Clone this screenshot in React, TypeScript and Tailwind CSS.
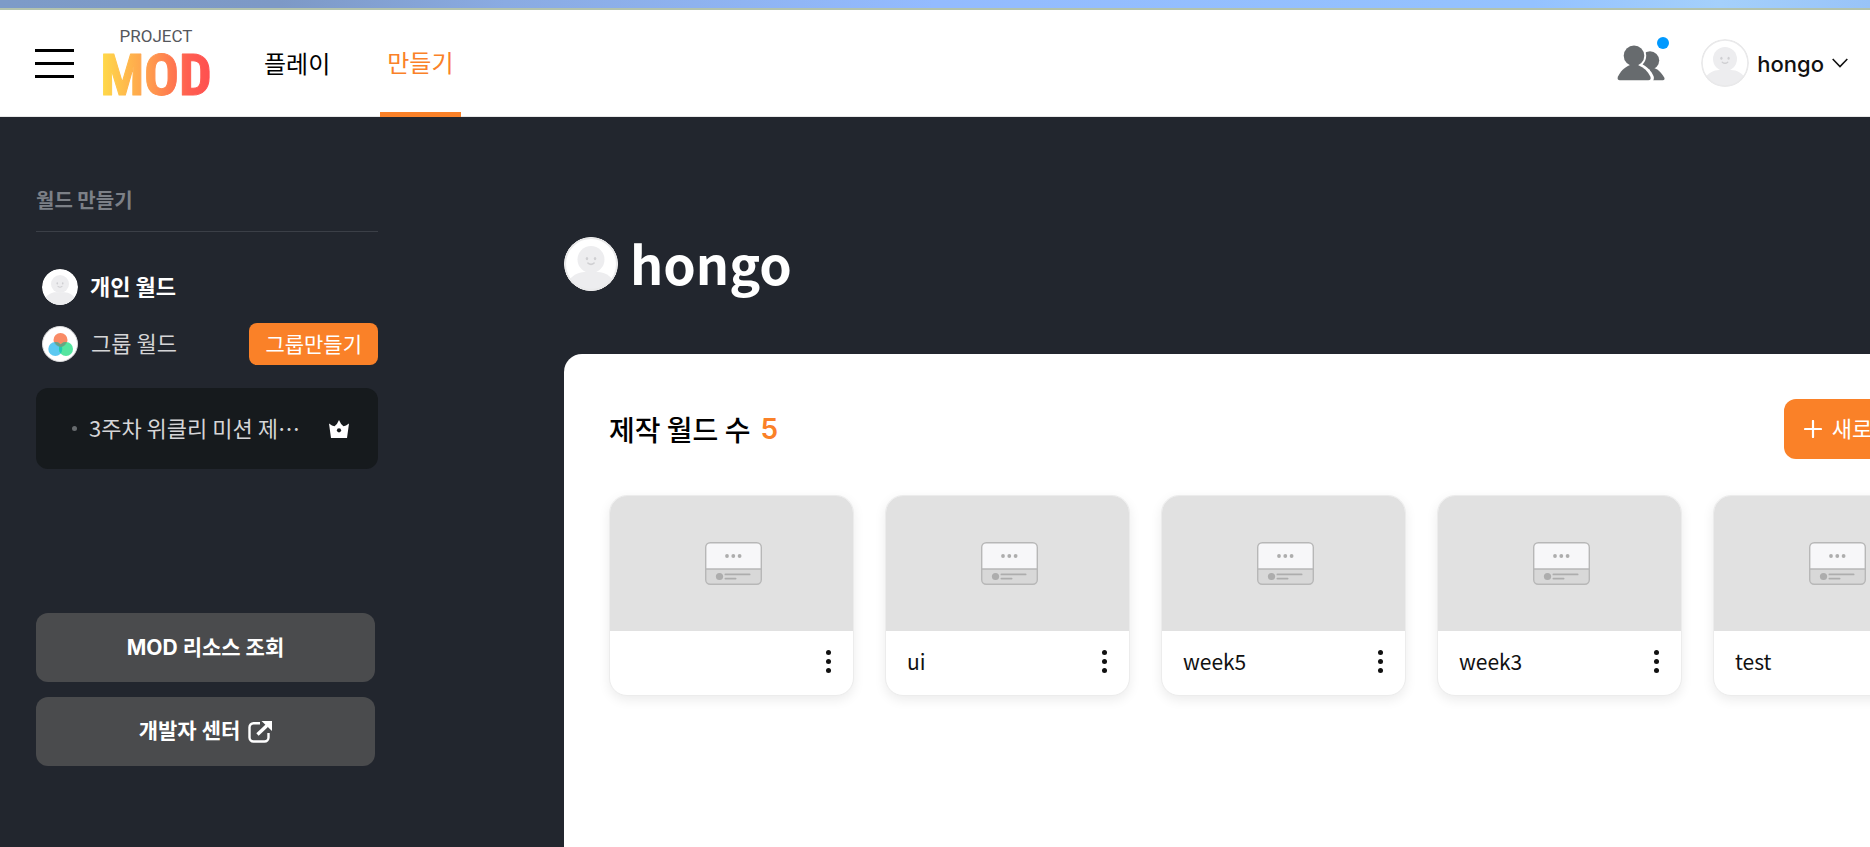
import React from "react";

type World = { id: number; name: string };

const worlds: World[] = [
  { id: 1, name: "" },
  { id: 2, name: "ui" },
  { id: 3, name: "week5" },
  { id: 4, name: "week3" },
  { id: 5, name: "test" },
];

function Avatar({ className, ring = false }: { className: string; ring?: boolean }) {
  return (
    <svg viewBox="0 0 48 48" className={`shrink-0 rounded-full ${className}`} aria-hidden="true">
      <defs>
        <clipPath id="avatar-clip">
          <circle cx="24" cy="24" r="24" />
        </clipPath>
      </defs>
      <g clipPath="url(#avatar-clip)">
        <rect width="48" height="48" fill="#fff" />
        <path d="M3 40C7 34 13 31 18 31h12c6 0 11 3 15 9v8H3z" fill="#ededef" />
        <circle cx="24" cy="20" r="12" fill="#ededef" />
        <ellipse cx="20.4" cy="19.2" rx="1.1" ry="1.5" fill="#cfcfd2" />
        <ellipse cx="27.6" cy="19.2" rx="1.1" ry="1.5" fill="#cfcfd2" />
        <path d="M21.3 23.2q2.700 2.200 5.400 0" stroke="#cfcfd2" strokeWidth="1.4" fill="none" strokeLinecap="round" />
      </g>
      {ring && <circle cx="24" cy="24" r="23.1" fill="none" stroke="#e9e9ea" strokeWidth="1.8" />}
    </svg>
  );
}

function GroupAvatar() {
  return (
    <svg viewBox="0 0 36 36" className="size-9 shrink-0" aria-hidden="true">
      <circle cx="18" cy="18" r="17.5" fill="#fff" stroke="#d9d9db" />
      <circle cx="18.5" cy="14" r="7" fill="#f98b66" />
      <circle cx="13.3" cy="23" r="7" fill="#3fc0ee" fillOpacity="0.85" />
      <circle cx="24" cy="23" r="7" fill="#37e08f" fillOpacity="0.85" />
      <path d="M18.6 18.500a7 7 0 0 1 0 9a7 7 0 0 1 0-9" fill="#20cbb0" />
      <path d="M12.8 16.100a7 7 0 0 0 5.700 4.900 7 7 0 0 0 5.800-4.900 7 7 0 0 0-5.600 2.300 7 7 0 0 0-5.900-2.300" fill="#6ba283" />
    </svg>
  );
}

function FriendsIcon() {
  return (
    <svg viewBox="0 0 48 36" className="h-9 w-12" aria-hidden="true" fill="#676b6e">
      <circle cx="33" cy="15.5" r="9.2" />
      <path d="M33 22c7 1 11 5 14.200 10.500.8 1.500.2 2.800-1.400 2.800H33z" />
      <circle cx="17" cy="10.8" r="12.2" fill="#fff" />
      <path d="M24 18.500c6 3 10.500 7.500 12.500 12.500.8 2 .3 4-.8 5.500H20z" fill="#fff" />
      <circle cx="17" cy="10.8" r="10.3" />
      <path d="M13 20h8c6 2.500 10 6.500 12.300 11.500 1 2.200 0 3.800-2 3.800H2.800C.9 35.300 0 33.700 1 31.500 3.500 26.500 7 22.500 13 20z" />
    </svg>
  );
}

function CrownIcon() {
  return (
    <svg viewBox="0 0 20 18" className="h-[18px] w-5 shrink-0" role="img" aria-label="그룹장">
      <path
        d="M0 3.500Q3.200 6 5.500 6.300 8.500 4 10 0q1.500 4 4.500 6.300Q16.800 6 20 3.500L18 18H2z"
        fill="#fff"
      />
      <circle cx="10" cy="10.3" r="2.1" fill="#161a1d" />
    </svg>
  );
}

function ExternalIcon() {
  return (
    <svg viewBox="0 0 24 22" className="h-[22px] w-6 shrink-0" aria-hidden="true">
      <path
        d="M12 2.200H5.500A4 4 0 0 0 1.500 6.200v10.300a4 4 0 0 0 4 4h11a4 4 0 0 0 4-4V12"
        fill="none"
        stroke="#fff"
        strokeWidth="2.4"
      />
      <path d="M9.500 13.500 19 4.500" stroke="#fff" strokeWidth="3.4" />
      <path d="M13.500 0H24v10z" fill="#fff" />
    </svg>
  );
}

function ThumbnailIcon() {
  return (
    <svg viewBox="0 0 57 43" className="h-[43px] w-[57px]" aria-hidden="true">
      <rect x=".7" y=".7" width="55.6" height="41.6" rx="4.5" fill="#f7f7f9" />
      <path d="M.7 27h55.600v10.800a4.500 4.500 0 0 1-4.500 4.500H5.200a4.500 4.500 0 0 1-4.500-4.500z" fill="#d8d8d8" />
      <path d="M.7 27h55.600" stroke="#b7b7b7" strokeWidth="1.4" />
      <rect x=".7" y=".7" width="55.6" height="41.6" rx="4.5" fill="none" stroke="#b7b7b7" strokeWidth="1.4" />
      <g fill="#adadad">
        <circle cx="22" cy="14" r="1.9" />
        <circle cx="28.3" cy="14" r="1.9" />
        <circle cx="34.6" cy="14" r="1.9" />
        <circle cx="14.5" cy="34.5" r="3.6" />
        <rect x="19.5" y="31.5" width="26" height="1.8" rx=".9" />
        <rect x="19.5" y="35.7" width="12" height="1.8" rx=".9" />
      </g>
    </svg>
  );
}

function Logo() {
  return (
    <svg viewBox="0 0 110 76" className="h-[76px] w-[110px] overflow-visible" role="img" aria-label="PROJECT MOD">
      <defs>
        <linearGradient id="logo-gradient" gradientUnits="userSpaceOnUse" x1="2" y1="0" x2="108" y2="0">
          <stop offset="0" stopColor="#ffd84a" />
          <stop offset="0.45" stopColor="#ff9a4e" />
          <stop offset="0.8" stopColor="#ff5f50" />
          <stop offset="1" stopColor="#ff5050" />
        </linearGradient>
      </defs>
      <text x="55" y="17" textAnchor="middle" fill="#55575c" className="font-[Roboto,sans-serif] text-[17px]">
        PROJECT
      </text>
      <text
        x="55"
        y="70"
        textAnchor="middle"
        fill="url(#logo-gradient)"
        stroke="url(#logo-gradient)"
        strokeWidth="1"
        strokeLinejoin="round"
        className="font-['Liberation_Sans_Narrow','Roboto_Condensed',Roboto,sans-serif] text-[58px] font-bold"
      >
        MOD
      </text>
    </svg>
  );
}

function Header() {
  return (
    <header className="flex h-[107px] border-b border-[#e8e8e8] bg-white pr-[22px] pl-[35px]">
      <button type="button" aria-label="메뉴" className="flex w-[39px] flex-col justify-center gap-[10px]">
        <span className="h-[3px] w-full bg-black" />
        <span className="h-[3px] w-full bg-black" />
        <span className="h-[3px] w-full bg-black" />
      </button>
      <a href="#home" className="ml-[27px] flex items-center">
        <Logo />
      </a>
      <nav className="ml-10 flex">
        <a href="#play" className="flex items-center px-[13px] text-[24px] text-black">
          플레이
        </a>
        <a
          href="#make"
          className="-mb-px ml-[37px] flex items-center border-t-4 border-b-[5px] border-t-transparent border-b-[#fa8128] px-[7px] text-[24px] text-[#fa8128]"
        >
          <span className="pb-0.5">만들기</span>
        </a>
      </nav>
      <div className="ml-auto flex items-center">
        <button type="button" aria-label="친구" className="relative mr-9">
          <FriendsIcon />
          <span className="absolute -top-2 -right-1 size-3 rounded-full bg-[#0099ff]" />
        </button>
        <button type="button" className="flex items-center gap-2">
          <Avatar className="size-12" ring />
          <span className="pt-0.5 font-[Inter,sans-serif] text-[22px] font-medium text-[#111]">hongo</span>
          <svg viewBox="0 0 16 10" className="h-[10px] w-4" aria-hidden="true">
            <path d="M.7 1 8 8.500 15.300 1" fill="none" stroke="#111" strokeWidth="1.6" />
          </svg>
        </button>
      </div>
    </header>
  );
}

function Sidebar() {
  return (
    <aside className="w-[378px] shrink-0 pt-[68px] pl-9">
      <h2 className="border-b border-[#3b3f47] pb-4 text-[20px] leading-[30px] font-bold text-[#7c8087]">월드 만들기</h2>
      <ul className="mt-[34px] flex flex-col gap-[15px] pl-[6px]">
        <li>
          <a href="#personal" className="flex h-[42px] items-center gap-3 text-[22px] font-bold text-white">
            <Avatar className="size-9" />
            <span className="pb-1">개인 월드</span>
          </a>
        </li>
        <li className="flex h-[42px] items-center justify-between">
          <a href="#group" className="flex items-center gap-[13px] text-[22px] text-[#d5d5d7]">
            <GroupAvatar />
            <span className="pb-1">그룹 월드</span>
          </a>
          <button type="button" className="h-[42px] rounded-lg bg-[#fa8128] px-4 text-[21px] text-white">
            그룹만들기
          </button>
        </li>
      </ul>
      <a
        href="#weekly"
        className="mt-[23px] flex h-[81px] items-center rounded-xl bg-[#161a1d] pr-[29px] pl-9 text-[22px] text-[#d5d5d7]"
      >
        <span className="mr-3 size-[5px] shrink-0 rounded-full bg-[#676b6e]" />
        <span className="mr-auto pb-0.5 whitespace-nowrap">3주차 위클리 미션 제⋯</span>
        <CrownIcon />
      </a>
      <div className="mt-36 mr-[3px] flex flex-col gap-[15px] font-[Inter,'Noto_Sans_CJK_KR',sans-serif] text-[21px] font-bold text-white">
        <button type="button" className="h-[69px] rounded-xl bg-[#4a4b4d]">
          MOD 리소스 조회
        </button>
        <a href="#developers" className="flex h-[69px] items-center justify-center gap-2 rounded-xl bg-[#4a4b4d]">
          <span className="pb-0.5">개발자 센터</span>
          <ExternalIcon />
        </a>
      </div>
    </aside>
  );
}

function WorldCard({ world }: { world: World }) {
  return (
    <li className="w-[245px] shrink-0 overflow-hidden rounded-[18px] border border-[#ececec] bg-white shadow-[0_4px_12px_rgba(0,0,0,0.08)]">
      <div className="flex h-[135px] items-center justify-center bg-[#e1e1e1] pl-[3px]">
        <ThumbnailIcon />
      </div>
      <div className="flex h-16 items-center justify-between pr-[17px] pb-[3px] pl-[21px]">
        <span className="text-[21px] text-[#111]">{world.name}</span>
        <button type="button" aria-label="더보기" className="flex w-4 flex-col items-center gap-1">
          <span className="size-[5px] rounded-full bg-[#111]" />
          <span className="size-[5px] rounded-full bg-[#111]" />
          <span className="size-[5px] rounded-full bg-[#111]" />
        </button>
      </div>
    </li>
  );
}

export default function App() {
  return (
    <div className="flex h-screen flex-col overflow-hidden bg-[#22262e] font-['Noto_Sans_CJK_KR',sans-serif]">
      <div className="h-[10px] shrink-0 border-b-2 border-[#b3c3ad] bg-[linear-gradient(to_right,#7d9bc8_0%,#7d99c6_15%,#8aabe2_27%,#93bbff_50%,#94c2ff_82%,#a4d0fb_92%,#98c3f8_100%)]" />
      <Header />
      <div className="flex min-h-0 flex-1">
        <Sidebar />
        <main className="ml-[186px] flex shrink-0 flex-col pt-[109px]">
          <div className="flex h-[76px] items-center gap-3">
            <Avatar className="size-[54px]" ring />
            <h1 className="pb-0.5 text-[52px] leading-[72px] font-bold text-white">hongo</h1>
          </div>
          <section className="mt-[52px] flex-1 rounded-tl-[18px] rounded-tr-[18px] bg-white px-[45px] pt-[45px]">
            <div className="flex items-center justify-between">
              <h2 className="flex items-center gap-[10px] text-[28px] font-medium text-black">
                제작 월드 수 <span className="font-[Inter,sans-serif] font-semibold text-[#fa8128]">5</span>
              </h2>
              <button
                type="button"
                className="flex h-[60px] items-center gap-[10px] rounded-xl bg-[#fa8128] px-5 text-[22px] whitespace-nowrap text-white"
              >
                <svg viewBox="0 0 18 18" className="size-[18px]" aria-hidden="true">
                  <path d="M9 1v16M1 9h16" stroke="#fff" strokeWidth="2.2" strokeLinecap="round" />
                </svg>
                <span className="pb-1">새로 만들기</span>
              </button>
            </div>
            <ul className="mt-9 flex gap-[31px]">
              {worlds.map((world) => (
                <WorldCard key={world.id} world={world} />
              ))}
            </ul>
          </section>
        </main>
      </div>
    </div>
  );
}
